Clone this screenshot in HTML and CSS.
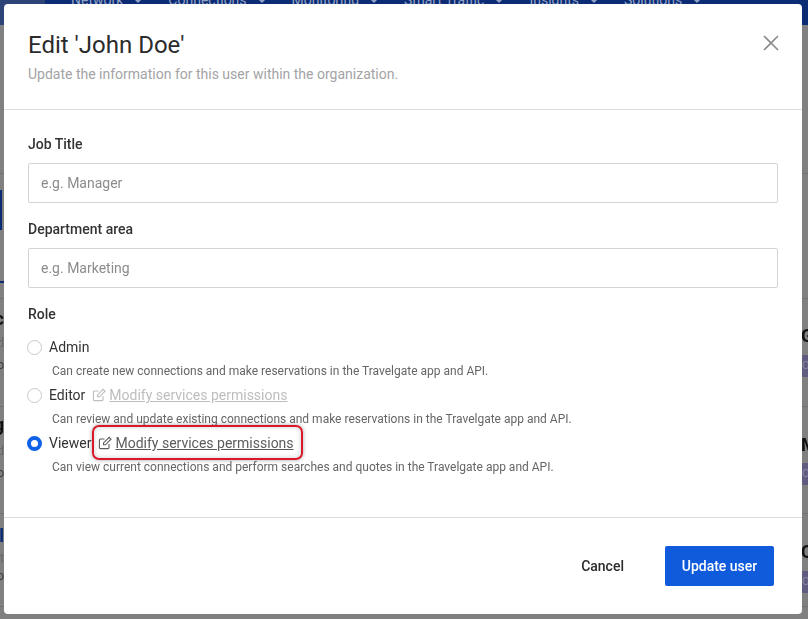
FILE: index.html
```html
<!DOCTYPE html>
<html lang="en">

<head>
    <meta charset="UTF-8">
    <title>Edit user</title>
    <link rel="stylesheet" href="styles.css">
</head>

<body>
    <!-- page behind the dialog, only the edges show -->
    <div class="backdrop">
        <header class="topbar">
            <span class="nav-item">Network</span>
            <span class="nav-item">Connections</span>
            <span class="nav-item">Monitoring</span>
            <span class="nav-item">Smart Traffic</span>
            <span class="nav-item">Insights</span>
            <span class="nav-item">Solutions</span>
        </header>
        <i class="bg-logo"></i>
        <i class="bg-tab"></i>
        <i class="bg-tabline"></i>
        <i class="bg-row row-a"></i>
        <i class="bg-row row-b"></i>
        <i class="bg-row row-c"></i>
        <i class="bg-row row-d"></i>
        <i class="bg-row row-e"></i>

        <b class="bg-letter right r1">G</b>
        <span class="bg-badge b1">OI</span>
        <b class="bg-letter right r2">M</b>
        <span class="bg-badge b2">OI</span>
        <b class="bg-letter right r3">C</b>
        <span class="bg-badge b3">OI</span>

        <b class="bg-letter left l1">c</b>
        <span class="bg-small s1">d</span>
        <span class="bg-small s2">o</span>
        <b class="bg-letter left l2">g</b>
        <span class="bg-small s3">d</span>
        <span class="bg-small s4">o</span>
        <b class="bg-letter left l3">l</b>
        <span class="bg-small s5">t</span>
        <span class="bg-small s6">o</span>
    </div>

    <div class="modal">
        <div class="modal-head">
            <div>
                <h1>Edit 'John Doe'</h1>
                <p>Update the information for this user within the organization.</p>
            </div>
            <button class="close-btn" aria-label="Close">
                <svg width="16" height="16" viewBox="0 0 16 16">
                    <path d="M1 1L15 15M15 1L1 15" stroke="#8a8a8a" stroke-width="1.6" fill="none" />
                </svg>
            </button>
        </div>

        <div class="modal-body">
            <label class="field-label">Job Title</label>
            <input class="field-input" type="text" placeholder="e.g. Manager">
            <label class="field-label">Department area</label>
            <input class="field-input" type="text" placeholder="e.g. Marketing">
            <div class="field-label role-label">Role</div>

            <div class="role">
                <div class="role-row">
                    <span class="radio"></span>
                    <span>Admin</span>
                </div>
                <div class="role-desc">Can create new connections and make reservations in the Travelgate app and API.</div>
            </div>
            <div class="role">
                <div class="role-row">
                    <span class="radio"></span>
                    <span>Editor</span>
                    <a class="perm-link disabled">
                        <svg width="14" height="14" viewBox="0 0 14 14">
                            <path d="M11 8v3.6a1 1 0 0 1-1 1H2.4a1 1 0 0 1-1-1V4a1 1 0 0 1 1-1H6.500M5.500 6.900V8.800H7.400L13 3.200L11.100 1.300Z" />
                        </svg>
                        <span>Modify services permissions</span>
                    </a>
                </div>
                <div class="role-desc">Can review and update existing connections and make reservations in the Travelgate app and API.</div>
            </div>
            <div class="role">
                <div class="role-row">
                    <span class="radio checked"></span>
                    <span>Viewer</span>
                    <a class="perm-link active">
                        <svg width="14" height="14" viewBox="0 0 14 14">
                            <path d="M11 8v3.6a1 1 0 0 1-1 1H2.4a1 1 0 0 1-1-1V4a1 1 0 0 1 1-1H6.500M5.500 6.900V8.800H7.400L13 3.200L11.100 1.300Z" />
                        </svg>
                        <span>Modify services permissions</span>
                    </a>
                </div>
                <div class="role-desc">Can view current connections and perform searches and quotes in the Travelgate app and API.</div>
            </div>
        </div>

        <div class="modal-foot">
            <button class="btn-cancel">Cancel</button>
            <button class="btn-primary">Update user</button>
        </div>
    </div>
</body>

</html>
```

FILE: styles.css
```css
* {
    box-sizing: border-box;
}

html, body {
    height: 100%;
}

body {
    margin: 0;
    overflow: hidden;
    font-family: Roboto, "Liberation Sans", sans-serif;
    background: #808080;
    color: #2b2b2b;
}

/* backdrop */
.backdrop {
    position: fixed;
    inset: 0;
    overflow: hidden;
}

.topbar {
    height: 25px;
    background: #0b2c74;
    color: #93a3c6;
    font-size: 14px;
    line-height: 1;
    display: flex;
    gap: 45px;
    padding-left: 71px;
}

.nav-item {
    position: relative;
    margin-top: -7px;
}

.nav-item::after {
    content: "";
    position: absolute;
    right: -18px;
    top: 7px;
    border-left: 3px solid transparent;
    border-right: 3px solid transparent;
    border-top: 3px solid #93a3c6;
}

.bg-logo {
    position: absolute;
    left: 0;
    top: 0;
    width: 45px;
    height: 25px;
    background: #2c4478;
}

.bg-tab {
    position: absolute;
    left: 0;
    top: 190px;
    width: 2px;
    height: 40px;
    background: #0b2c74;
}

.bg-tabline {
    position: absolute;
    left: 0;
    top: 281px;
    width: 4px;
    height: 2px;
    background: #0b2c74;
}

.bg-row {
    position: absolute;
    left: 0;
    right: 0;
    height: 1px;
    background: #717171;
}

.row-a { top: 173px; }
.row-b { top: 298px; }
.row-c { top: 406px; }
.row-d { top: 513px; }
.row-e { top: 606px; }

.bg-letter {
    position: absolute;
    font-size: 18px;
    line-height: 20px;
    color: #111;
}

.bg-letter.right {
    left: 801px;
}

.bg-letter.left {
    right: 804px;
}

.r1 { top: 326px; }
.r2 { top: 435px; }
.r3 { top: 542px; }
.l1 { top: 309px; }
.l2 { top: 415px; }
.l3 { top: 526px; color: #0b2c74; }

.bg-badge {
    position: absolute;
    left: 795px;
    width: 13px;
    height: 22px;
    padding-left: 7px;
    background: #605c80;
    color: #8a88a0;
    font-size: 11px;
    line-height: 22px;
}

.b1 { top: 355px; }
.b2 { top: 463px; }
.b3 { top: 571px; }

.bg-small {
    position: absolute;
    right: 804px;
    font-size: 12px;
    line-height: 14px;
    color: #3c3c3c;
}

.s1 { top: 336px; color: #666; }
.s2 { top: 358px; }
.s3 { top: 444px; color: #666; }
.s4 { top: 466px; }
.s5 { top: 551px; color: #666; }
.s6 { top: 569px; }

/* dialog */
.modal {
    position: absolute;
    left: 4px;
    top: 4px;
    width: 798px;
    height: 610px;
    background: #fff;
    border-radius: 4px;
    display: flex;
    flex-direction: column;
}

.modal-head {
    height: 106px;
    border-bottom: 1px solid #dedede;
    padding: 25px 23px 0 24px;
    display: flex;
    justify-content: space-between;
    align-items: flex-start;
}

.modal-head h1 {
    margin: 0;
    font-size: 24px;
    font-weight: 400;
    line-height: 32px;
    color: #2b2b2b;
}

.modal-head p {
    margin: 3px 0 0;
    font-size: 14px;
    line-height: 20px;
    color: #a3a3a6;
}

.close-btn {
    border: none;
    background: none;
    padding: 0;
    margin: 6px 0 0;
    width: 16px;
    height: 16px;
    display: block;
}

.close-btn svg {
    display: block;
}

.modal-body {
    flex: 1;
    padding: 24px 24px 0;
    display: flex;
    flex-direction: column;
}

.field-label {
    font-size: 14px;
    font-weight: 500;
    line-height: 20px;
    color: #333;
}

.field-input {
    width: 100%;
    height: 40px;
    margin: 9px 0 16px;
    padding: 0 12px;
    border: 1px solid #d4d4d4;
    border-radius: 2px;
    font-family: inherit;
    font-size: 14px;
    outline: none;
}

.field-input::placeholder {
    color: #8b8b8b;
    opacity: 1;
}

.role-label {
    margin-bottom: 11px;
}

.role {
    display: flex;
    flex-direction: column;
}

.role-row {
    height: 24px;
    display: flex;
    align-items: center;
    gap: 6px;
    font-size: 14px;
    color: #333;
}

.radio {
    width: 15px;
    height: 15px;
    flex: none;
    margin: 0 1px 0 -1px;
    border: 1px solid #c8c8c8;
    border-radius: 50%;
    background: #fff;
}

.radio.checked {
    border: 4px solid #0f62e6;
}

.role-desc {
    height: 24px;
    line-height: 24px;
    padding-left: 24px;
    font-size: 12px;
    color: #666;
}

.perm-link {
    display: inline-flex;
    align-items: center;
    gap: 3px;
    margin-left: 1px;
}

.perm-link span {
    text-decoration: underline;
}

.perm-link svg {
    fill: none;
    stroke: currentColor;
    stroke-width: 1.1;
}

.perm-link.disabled {
    color: #bdbdbd;
}

.perm-link.active {
    position: relative;
    color: #5c5c5c;
}

/* red annotation around the viewer link */
.perm-link.active::before {
    content: "";
    position: absolute;
    left: -6px;
    right: -9px;
    top: -10px;
    bottom: -9px;
    border: 2px solid #d9182a;
    border-radius: 7px;
    box-shadow: 0 0 4px rgba(0, 0, 0, 0.35), inset 0 0 5px rgba(0, 0, 0, 0.2);
}

.modal-foot {
    height: 97px;
    border-top: 1px solid #dedede;
    padding: 28px 28px 0 0;
    display: flex;
    justify-content: flex-end;
    align-items: flex-start;
    gap: 25px;
}

.modal-foot button {
    height: 40px;
    font-family: inherit;
    font-size: 14px;
    font-weight: 500;
    border: none;
    border-radius: 2px;
}

.btn-cancel {
    background: none;
    color: #2b2b2b;
    padding: 0 16px;
}

.btn-primary {
    width: 109px;
    background: #0f5bdc;
    color: #fff;
}
```
